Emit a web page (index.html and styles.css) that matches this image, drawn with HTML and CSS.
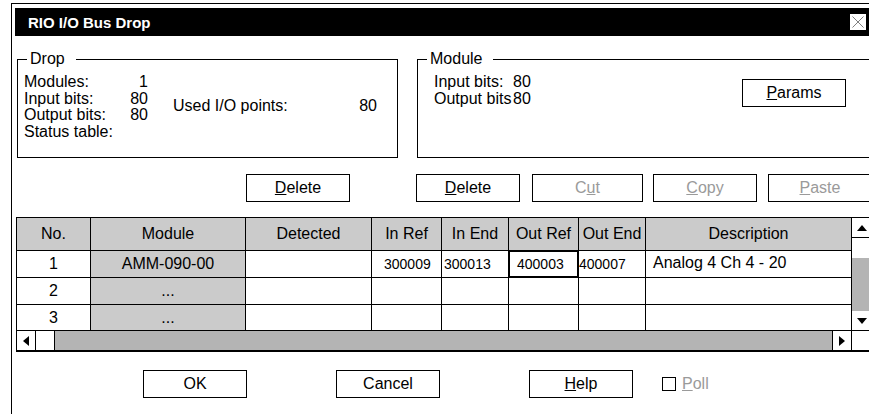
FILE: index.html
```html
<!DOCTYPE html>
<html lang="en">
<head>
  <meta charset="UTF-8">
  <title>RIO I/O Bus Drop</title>
  <link rel="stylesheet" href="styles.css">
</head>
<body>
  <div class="window">
    <div class="titlebar">
      <span>RIO I/O Bus Drop</span>
      <span class="close"><svg width="16" height="16" viewBox="0 0 16 16"><path d="M2.5 2.5 L13.5 13.5 M13.5 2.5 L2.5 13.5" stroke="#808080" stroke-width="1" fill="none"/></svg></span>
    </div>

    <!-- drop / module info -->
    <div class="groups">
      <fieldset class="group drop">
        <legend>Drop</legend>
        <div class="drop-body">
          <div class="stats">
            <span>Modules:</span><span class="val">1</span>
            <span>Input bits:</span><span class="val">80</span>
            <span>Output bits:</span><span class="val">80</span>
            <span>Status table:</span><span class="val"></span>
          </div>
          <div class="used"><span>Used I/O points:</span><span>80</span></div>
        </div>
      </fieldset>
      <fieldset class="group module">
        <legend>Module</legend>
        <div class="module-body">
          <div class="bits">
            <span>Input bits:</span><span>80</span>
            <span>Output bits</span><span>80</span>
          </div>
          <button type="button" class="btn params"><u>P</u>arams</button>
        </div>
      </fieldset>
    </div>

    <div class="toolbar">
      <button type="button" class="btn"><u>D</u>elete</button>
      <button type="button" class="btn far"><u>D</u>elete</button>
      <button type="button" class="btn cut" disabled>C<u>u</u>t</button>
      <button type="button" class="btn copy" disabled><u>C</u>opy</button>
      <button type="button" class="btn paste" disabled><u>P</u>aste</button>
    </div>

    <!-- module table -->
    <div class="grid">
      <div class="hd">No.</div>
      <div class="hd">Module</div>
      <div class="hd">Detected</div>
      <div class="hd">In Ref</div>
      <div class="hd">In End</div>
      <div class="hd">Out Ref</div>
      <div class="hd">Out End</div>
      <div class="hd">Description</div>

      <div class="cell center">1</div>
      <div class="cell center gray">AMM-090-00</div>
      <div class="cell"></div>
      <div class="cell num in-ref">300009</div>
      <div class="cell num in-end">300013</div>
      <div class="cell num out-ref focus">400003</div>
      <div class="cell num out-end">400007</div>
      <div class="cell desc">Analog 4 Ch 4 - 20</div>

      <div class="cell center">2</div>
      <div class="cell center gray">...</div>
      <div class="cell"></div>
      <div class="cell"></div>
      <div class="cell"></div>
      <div class="cell"></div>
      <div class="cell"></div>
      <div class="cell"></div>

      <div class="cell center">3</div>
      <div class="cell center gray">...</div>
      <div class="cell"></div>
      <div class="cell"></div>
      <div class="cell"></div>
      <div class="cell"></div>
      <div class="cell"></div>
      <div class="cell"></div>

      <div class="vscroll">
        <div class="arrow up"><svg width="10" height="6" viewBox="0 0 10 6"><polygon points="5,0 10,6 0,6" fill="#000"/></svg></div>
        <div class="vtrack"><div class="vthumb"></div></div>
        <div class="arrow down"><svg width="10" height="6" viewBox="0 0 10 6"><polygon points="0,0 10,0 5,6" fill="#000"/></svg></div>
      </div>

      <div class="hscroll">
        <div class="arrow left"><svg width="6" height="10" viewBox="0 0 6 10"><polygon points="6,0 6,10 0,5" fill="#000"/></svg></div>
        <div class="hthumb"></div>
        <div class="htrack"></div>
        <div class="arrow right"><svg width="6" height="10" viewBox="0 0 6 10"><polygon points="0,0 6,5 0,10" fill="#000"/></svg></div>
      </div>
      <div class="corner"></div>
    </div>

    <div class="footer">
      <button type="button" class="btn">OK</button>
      <button type="button" class="btn wide-gap">Cancel</button>
      <button type="button" class="btn wide-gap"><u>H</u>elp</button>
      <label class="poll"><span class="box"></span><span><u>P</u>oll</span></label>
    </div>
  </div>
</body>
</html>
```

FILE: styles.css
```css
html, body { margin:0; height:100%; overflow:hidden; background:#fff; }
body { font-family:"Liberation Sans", Arial, sans-serif; font-size:16px; color:#000; }

.window { margin:3px 0 0 11px; border-top:1px solid #000; border-left:1px solid #000; padding:4px 0 0 3px; width:870px; height:420px; }

.titlebar { width:855px; height:28px; box-sizing:border-box; padding:0 4px 0 13px; background:#000; color:#fff; font-size:15px; font-weight:bold; display:flex; align-items:center; justify-content:space-between; }
.close { width:16px; height:16px; background:#fff; display:flex; }

.groups { display:flex; gap:19px; margin:15px 0 0 2px; }
.group { flex:none; margin:0; border:1px solid #000; padding:7px 6px 17px; min-width:0; box-sizing:border-box; }
.group legend { padding:0 11px 0 3px; margin-left:3px; line-height:16px; }
.drop { width:381px; }
.module { width:490px; }

.drop-body { display:flex; line-height:16.5px; }
.stats { display:grid; grid-template-columns:100px 24px; }
.stats .val { text-align:right; }
.used { display:flex; justify-content:space-between; width:204px; margin-left:25px; padding-top:24px; }

.module-body { display:flex; line-height:16.5px; padding-left:10px; }
.bits { display:grid; grid-template-columns:79px auto; align-content:start; width:308px; }
.params { margin-top:5px; }

.btn { font:inherit; color:#000; background:#fff; border:1px solid #000; width:104px; height:28px; padding:0; box-sizing:border-box; }
.btn:disabled { color:#9a9a9a; }

.toolbar { display:flex; margin:16px 0 0 231px; }
.toolbar .far { margin-left:66px; }
.toolbar .cut { margin-left:12px; width:111px; }
.toolbar .copy { margin-left:10px; }
.toolbar .paste { margin-left:11px; }

.grid { display:grid; grid-template-columns:73px 154px 125px 69px 66px 69px 66px 205px 19px; grid-template-rows:32px 26px 26px 25px 19px; gap:1px; background:#000; border-top:1px solid #000; border-left:1px solid #000; border-bottom:2px solid #000; margin:15px 0 0 1px; width:max-content; }
.hd { background:#cbcbcb; display:flex; align-items:center; justify-content:center; }
.cell { background:#fff; display:flex; align-items:center; }
.center { justify-content:center; }
.gray { background:#cbcbcb; }
.num { font-size:14px; }
.in-ref { padding-left:12px; }
.in-end { padding-left:2px; }
.out-ref { padding-left:8px; }
.out-end { padding-left:0; }
.desc { padding-left:7px; padding-bottom:3px; }
.focus { outline:2px solid #000; outline-offset:-1px; }

.vscroll { grid-column:9; grid-row:1 / 5; background:#fff; display:flex; flex-direction:column; }
.arrow { display:flex; align-items:center; justify-content:center; background:#fff; }
.vscroll .up { height:19px; border-bottom:1px solid #000; }
.vtrack { flex:1; padding-top:20px; }
.vthumb { height:53px; background:#b4b4b4; }
.vscroll .down { height:19px; }

.hscroll { grid-column:1 / 9; grid-row:5; display:flex; background:#b4b4b4; }
.hscroll .left { width:18px; border-right:1px solid #000; }
.hthumb { width:18px; background:#fff; border-right:1px solid #000; }
.htrack { flex:1; }
.hscroll .right { width:18px; border-left:1px solid #000; }
.corner { grid-column:9; grid-row:5; background:#fff; }

.footer { display:flex; align-items:center; margin:18px 0 0 128px; }
.footer .wide-gap { margin-left:89px; }
.poll { display:flex; align-items:center; gap:6px; margin-left:29px; color:#9a9a9a; }
.poll .box { width:14px; height:14px; box-sizing:border-box; border:1px solid #000; background:#fff; }
```
